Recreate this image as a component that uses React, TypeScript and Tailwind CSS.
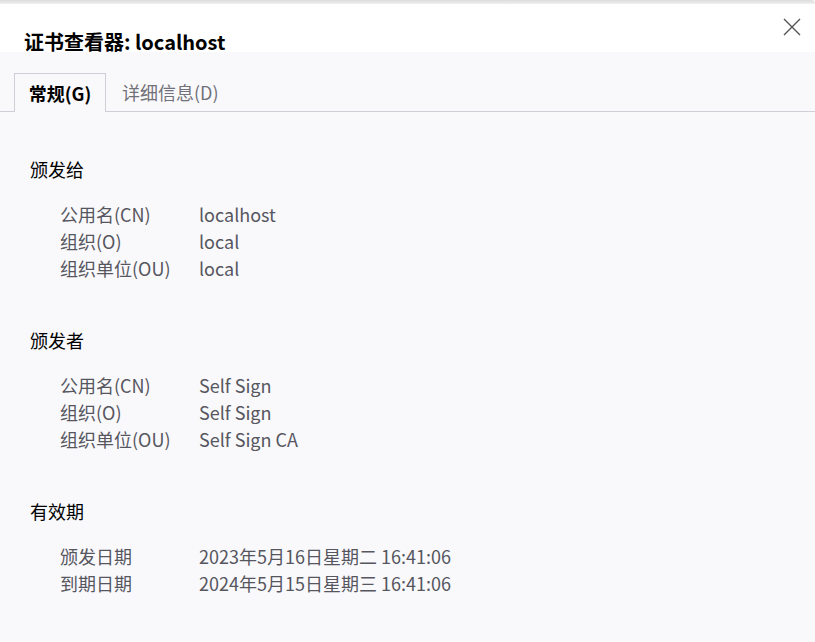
const font = { fontFamily: '"Noto Sans CJK SC", "Noto Sans", sans-serif' };

const sections = [
  {
    title: "颁发给",
    rows: [
      ["公用名(CN)", "localhost"],
      ["组织(O)", "local"],
      ["组织单位(OU)", "local"],
    ],
  },
  {
    title: "颁发者",
    rows: [
      ["公用名(CN)", "Self Sign"],
      ["组织(O)", "Self Sign"],
      ["组织单位(OU)", "Self Sign CA"],
    ],
  },
  {
    title: "有效期",
    rows: [
      ["颁发日期", "2023年5月16日星期二 16:41:06"],
      ["到期日期", "2024年5月15日星期三 16:41:06"],
    ],
  },
];

export default function App() {
  return (
    <div className="h-[642px] w-[815px] overflow-hidden bg-[#f9f9fb]" style={font}>
      <div className="h-[4px] rounded-tr-md bg-gradient-to-b from-[#dcdcdc] to-[#f0f0f0]" />
      <header className="relative h-[48px] bg-white pl-[24px]">
        <h1 className="pt-[25px] text-[20px] font-bold leading-[26px] text-black">证书查看器: localhost</h1>
        <button className="absolute right-[14px] top-[14px] text-[#555]" aria-label="close">
          <svg width="18" height="18" viewBox="0 0 18 18" stroke="currentColor" strokeWidth="1.4" fill="none">
            <path d="M1 1 L17 17 M17 1 L1 17" />
          </svg>
        </button>
      </header>
      <nav className="flex border-b border-[#cfcfd8] pl-[14px] pt-[21px]">
        <div className="-mb-px flex h-[39px] w-[92px] items-center justify-center border border-b-0 border-[#cfcfd8] bg-[#f9f9fb] text-[18px] font-bold text-black">
          常规(G)
        </div>
        <div className="flex h-[38px] items-center px-[16px] text-[18px] text-[#717179]">详细信息(D)</div>
      </nav>
      <main className="pl-[30px] pt-[44px]">
        {sections.map((s) => (
          <section key={s.title} className="mb-[45px]">
            <h2 className="text-[18px] leading-[27px] text-black">{s.title}</h2>
            <div className="mt-[18px] pl-[30px]">
              {s.rows.map(([k, v]) => (
                <div key={k} className="flex text-[18px] leading-[27px] text-[#56565f]">
                  <span className="w-[139px]">{k}</span>
                  <span>{v}</span>
                </div>
              ))}
            </div>
          </section>
        ))}
      </main>
    </div>
  );
}
